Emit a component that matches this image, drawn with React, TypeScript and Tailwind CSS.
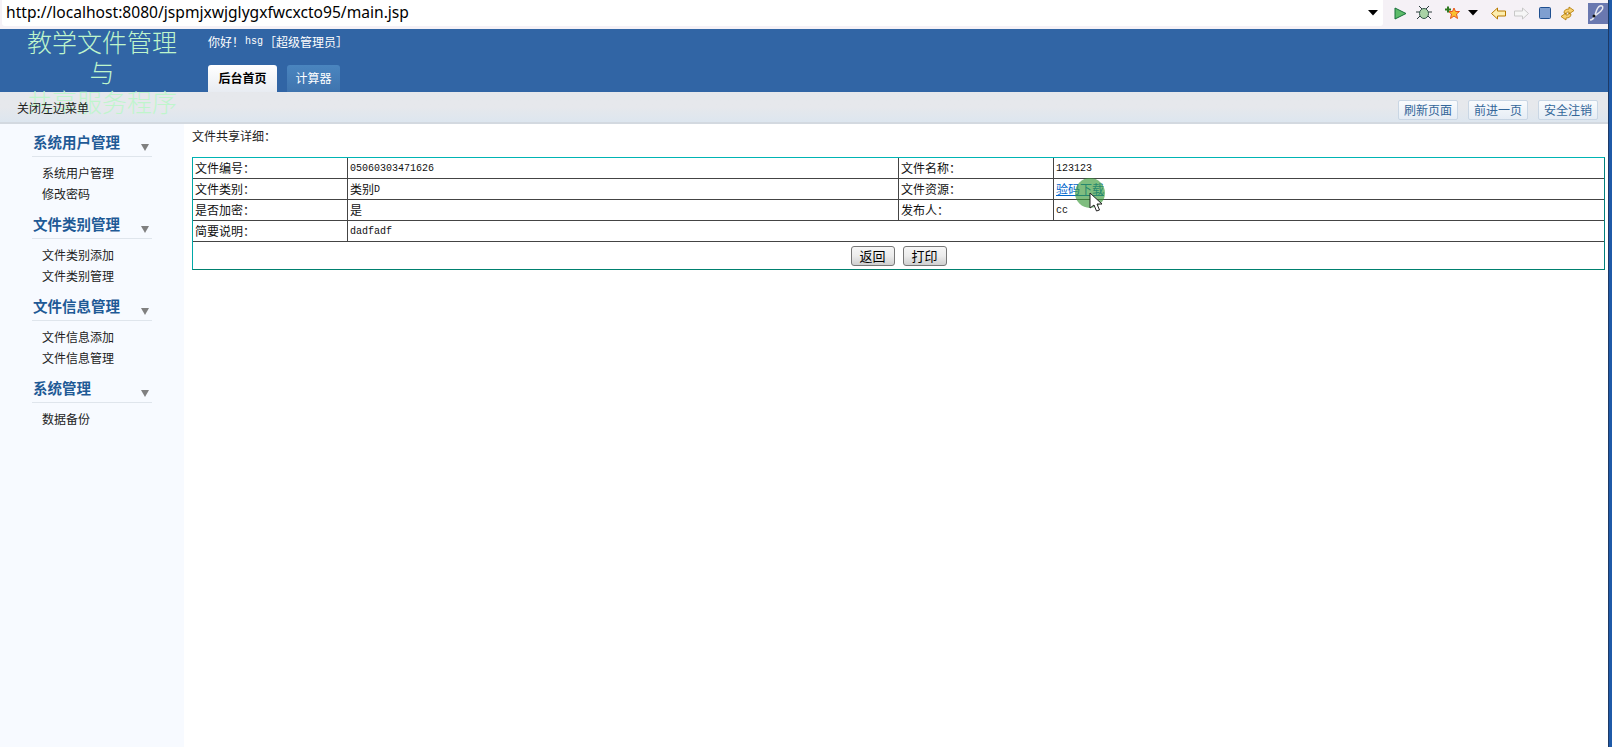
const MONO = "font-['Liberation_Mono','Noto_Sans_CJK_SC',monospace] text-[10px]";

const menus = [
  { title: "系统用户管理", items: ["系统用户管理", "修改密码"] },
  { title: "文件类别管理", items: ["文件类别添加", "文件类别管理"] },
  { title: "文件信息管理", items: ["文件信息添加", "文件信息管理"] },
  { title: "系统管理", items: ["数据备份"] },
];

const ToolbarIcons = () => (
  <div className="flex h-[26px] shrink-0 items-center">
    {/* run */}
    <svg width="13" height="13" viewBox="0 0 13 13" className="ml-[11px]">
      <path d="M1 1l11 5.500L1 12z" fill="#5dbb6a" stroke="#17703a" />
    </svg>
    {/* debug */}
    <svg width="16" height="16" viewBox="0 0 16 16" className="ml-[9px]">
      <path d="M3 1l3 3M13 1l-3 3M0 7h4M12 7h4M1 14l3-3M15 14l-3-3" stroke="#2c3c3c" />
      <ellipse cx="8" cy="8.500" rx="4.500" ry="5" fill="#a9d3a6" stroke="#35584a" />
    </svg>
    {/* new star */}
    <svg width="15" height="15" viewBox="0 0 15 15" className="ml-[13px]">
      <path d="M9 2l1.500 3.500H14.500L11.500 8l1 4.500L9 10l-3.500 2.500 1-4.500L3.500 5.500h4z" fill="#f9c030" stroke="#e8541c" />
      <path d="M0 3.500h6M3 0.500v6" stroke="#2f7a20" strokeWidth="2" />
    </svg>
    <svg width="10" height="6" viewBox="0 0 10 6" className="ml-[8px]">
      <path d="M0 0h10L5 5.500z" fill="#000" />
    </svg>
    {/* back */}
    <svg width="15" height="13" viewBox="0 0 15 13" className="ml-[13px]">
      <path d="M0.500 6.500L6.500 1v3h8v5h-8v3z" fill="#fdeeb0" stroke="#b87a00" />
    </svg>
    {/* forward */}
    <svg width="15" height="13" viewBox="0 0 15 13" className="ml-[8px]">
      <path d="M14.500 6.500L8.500 1v3h-8v5h8v3z" fill="#f6f6f6" stroke="#c8c8c8" />
    </svg>
    {/* stop */}
    <svg width="12" height="12" viewBox="0 0 12 12" className="ml-[10px]">
      <rect x="0.500" y="0.500" width="11" height="11" rx="1" fill="#7f9fd0" stroke="#1f4f90" />
    </svg>
    {/* sync */}
    <svg width="15" height="15" viewBox="0 0 15 15" className="ml-[9px]">
      <path d="M4 7c0-3 2-4 5-4V1l5 3.500L9 8V6C7 6 6 6.500 6 8zM11 8c0 3-2 4-5 4v2l-5-3.500L6 7v2c2 0 3-.5 3-2z" fill="#f6cf70" stroke="#b07800" strokeWidth="0.800" />
    </svg>
    {/* perspective */}
    <svg width="20" height="21" viewBox="0 0 20 21" className="ml-[13px]">
      <rect width="20" height="21" fill="#6a78b0" />
      <path d="M2 17c3 0 4-2 5-5s2-8 5-9 4 2 1 5-6 4-7 6" stroke="#e8e8f0" strokeWidth="1.500" fill="none" />
      <circle cx="6" cy="13" r="1.500" fill="#111" />
    </svg>
  </div>
);

const TopButton = ({ label }: { label: string }) => (
  <span className="flex h-[20px] w-[60px] items-center justify-center rounded-[2px] border border-[#c9d6e4] bg-gradient-to-b from-[#f9fbfd] to-[#e6edf5] pb-[1px] text-[12px] text-[#336699]">
    {label}
  </span>
);

const Cell = ({ children, mono, last }: { children: React.ReactNode; mono?: boolean; last?: boolean }) => (
  <td className={`h-[21px] border-b border-[#444] p-0 px-[2px] text-[#111] ${last ? "" : "border-r"}`}>
    <div className={`flex h-[20px] items-center ${mono ? MONO : "text-[12px]"}`}>{children}</div>
  </td>
);

const PageButton = ({ label }: { label: string }) => (
  <button className="h-[20px] w-[44px] rounded-[3px] border border-[#777] bg-gradient-to-b from-[#f6f6f6] via-[#ececec] to-[#cfcfcf] pb-[1px] text-[13px] leading-[17px] text-black">
    {label}
  </button>
);

export default function App() {
  return (
    <div className="relative flex h-[747px] w-[1612px] flex-col overflow-hidden bg-white font-['Noto_Sans_CJK_SC',sans-serif] text-[12px] text-[#222]">
      {/* browser address bar */}
      <div className="flex h-[29px] shrink-0 items-start bg-[#f5f1f6] pl-[2px]">
        <div className="flex h-[26px] w-[1381px] shrink-0 items-center justify-between rounded-b-[3px] bg-white pl-[4px] pr-[5px] font-['Noto_Sans',sans-serif] text-[15.600px] text-black">
          <span className="pb-[1px]">http://localhost:8080/jspmjxwjglygxfwcxcto95/main.jsp</span>
          <svg width="10" height="6" viewBox="0 0 10 6">
            <path d="M0 0h10L5 5.500z" fill="#000" />
          </svg>
        </div>
        <ToolbarIcons />
      </div>

      <div className="flex min-h-0 flex-1 flex-col">
        {/* header */}
        <div className="flex h-[63px] shrink-0 bg-[#3165a5]">
          <div className="relative z-10 h-[63px] w-[208px] shrink-0">
            <div className="w-[204px] text-center font-['Liberation_Serif','Noto_Sans_CJK_SC',serif] text-[25px] font-light leading-[30px] text-[#bff5cc]">
              教学文件管理
              <br />与<br />
              共享服务程序
            </div>
          </div>
          <div className="flex flex-col">
            <div className="flex h-[36px] items-start pt-[4px] text-[12px] leading-[18px] text-white">
              你好！<span className={`${MONO} ml-[1px] leading-[18px]`}>hsg</span>
              <span className="ml-[1px]">［超级管理员］</span>
            </div>
            <div className="flex items-end gap-[10px]">
              <span className="flex h-[27px] w-[69px] items-center justify-center rounded-t-[3px] bg-gradient-to-b from-white to-[#e8ecf2] pb-[1px] text-[12px] font-bold text-black">
                后台首页
              </span>
              <span className="flex h-[27px] w-[53px] items-center justify-center rounded-t-[3px] bg-gradient-to-b from-[#4a85bf] to-[#3f74ae] pb-[1px] text-[12px] text-white">
                计算器
              </span>
            </div>
          </div>
        </div>

        {/* sub bar */}
        <div className="flex h-[32px] shrink-0 items-start justify-between border-b-2 border-[#d3d9e0] bg-gradient-to-b from-[#e6e8ec] via-[#e6e8ec] to-[#dde6ef] pl-[17px] pr-[14px] pt-[8px]">
          <span className="relative z-20 mt-[-1px] text-[12px] leading-[18px] text-[#222]">关闭左边菜单</span>
          <div className="flex gap-[10px]">
            <TopButton label="刷新页面" />
            <TopButton label="前进一页" />
            <TopButton label="安全注销" />
          </div>
        </div>

        <div className="flex min-h-0 flex-1">
          {/* left menu */}
          <aside className="w-[184px] shrink-0 bg-[#f7faff] pl-[32px]">
            {menus.map((menu) => (
              <div key={menu.title} className="mb-[2px] w-[120px]">
                <div className="flex h-[33px] items-end justify-between border-b border-[#dfe5ec] pb-[4px] pl-[1px] pr-[2px]">
                  <span className="text-[14.500px] font-bold leading-[20px] text-[#1f5a96]">{menu.title}</span>
                  <svg width="10" height="8" viewBox="0 0 10 8">
                    <path d="M1 0h8L5 7z" fill="#808080" />
                  </svg>
                </div>
                <ul className="pl-[10px] pt-[5px]">
                  {menu.items.map((item) => (
                    <li key={item} className="h-[21px] text-[12px] leading-[21px] text-[#222]">
                      {item}
                    </li>
                  ))}
                </ul>
              </div>
            ))}
          </aside>

          {/* content */}
          <main className="min-w-0 flex-1 pl-[8px] pr-[7px]">
            <div className="h-[33px] pt-[3px] text-[12px] leading-[18px] text-[#222]">文件共享详细：</div>
            <table className="w-[1413px] table-fixed border-separate border-spacing-0 border border-b-[#00806f] border-l-[#00a8a8] border-r-[#00807a] border-t-[#00b4b4]">
              <colgroup>
                <col className="w-[155px]" />
                <col className="w-[551px]" />
                <col className="w-[155px]" />
                <col className="w-[550px]" />
              </colgroup>
              <tbody>
                <tr>
                  <Cell>文件编号：</Cell>
                  <Cell mono>05060303471626</Cell>
                  <Cell>文件名称：</Cell>
                  <Cell mono last>
                    123123
                  </Cell>
                </tr>
                <tr>
                  <Cell>文件类别：</Cell>
                  <Cell>
                    类别<span className={MONO}>D</span>
                  </Cell>
                  <Cell>文件资源：</Cell>
                  <td className="relative h-[21px] border-b border-[#444] p-0 px-[2px] text-[12px]">
                    <div className="flex h-[20px] items-center">
                      <span className="text-[#0066cc] underline">验码下载</span>
                    </div>
                    {/* mouse highlight */}
                    <span className="absolute left-[21px] top-[-1px] h-[30px] w-[30px] rounded-full bg-[#3a9a3a]/65" />
                    <svg width="14" height="20" viewBox="0 0 14 20" className="absolute left-[35px] top-[13px]">
                      <path d="M1 1v15l4-3 2.500 6 3-1-2.500-6h5z" fill="#fff" stroke="#222" />
                    </svg>
                  </td>
                </tr>
                <tr>
                  <Cell>是否加密：</Cell>
                  <Cell>是</Cell>
                  <Cell>发布人：</Cell>
                  <Cell mono last>
                    cc
                  </Cell>
                </tr>
                <tr>
                  <Cell>简要说明：</Cell>
                  <td colSpan={3} className="h-[21px] border-b border-[#444] p-0 px-[2px] text-[#111]">
                    <div className={`flex h-[20px] items-center ${MONO}`}>dadfadf</div>
                  </td>
                </tr>
                <tr>
                  <td colSpan={4} className="h-[27px] p-0 text-center">
                    <div className="flex justify-center gap-[8px]">
                      <PageButton label="返回" />
                      <PageButton label="打印" />
                    </div>
                  </td>
                </tr>
              </tbody>
            </table>
          </main>
        </div>
      </div>
      {/* window edge */}
      <div className="absolute bottom-0 right-0 top-0 w-[4px] border-l border-[#1d3a66] bg-[#1f5aa8]" />
    </div>
  );
}
